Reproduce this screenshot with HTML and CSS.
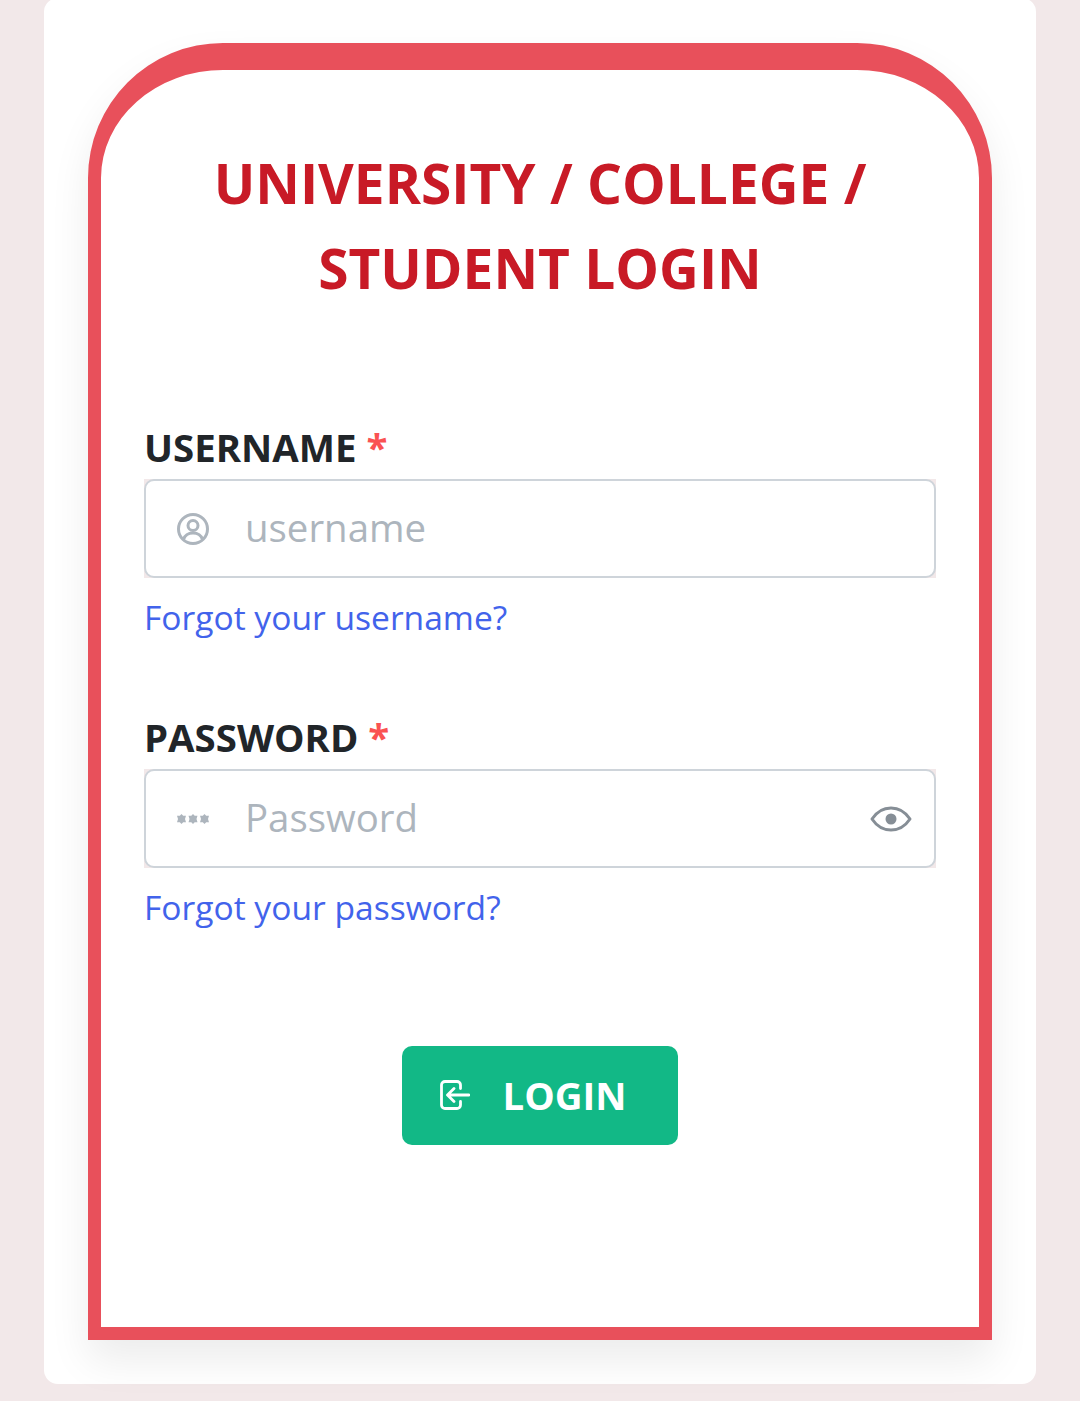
FILE: index.html
```html
<!DOCTYPE html>
<html lang="en">
<head>
  <meta charset="UTF-8" />
  <meta name="viewport" content="width=device-width, initial-scale=1.0"/>
  <title>Student Login</title>
  <link rel="stylesheet" href="styles.css">
</head>
<body>
  <div class="card">
    <form class="login-box">
      <h1 class="login-title">UNIVERSITY / COLLEGE / STUDENT LOGIN</h1>

      <div class="field">
        <label class="field-label" for="username">USERNAME <span class="required">*</span></label>
        <div class="input-group">
          <span class="input-icon">
            <svg width="34" height="34" viewBox="0 0 34 34" fill="none" stroke="#adb5bd" stroke-width="3">
              <circle cx="17" cy="17" r="14.5"/>
              <circle cx="17" cy="13.5" r="5"/>
              <path d="M7.500 27.500c1.500-4.500 5-6.500 9.500-6.500s8 2 9.500 6.500"/>
            </svg>
          </span>
          <input class="text-input" id="username" type="text" placeholder="username">
        </div>
        <a class="forgot-link" href="#">Forgot your username?</a>
      </div>

      <div class="field">
        <label class="field-label" for="password">PASSWORD <span class="required">*</span></label>
        <div class="input-group">
          <span class="input-icon">
            <svg width="34" height="11" viewBox="0 0 34 10" fill="#adb5bd">
              <path d="M5.500 0 7.200 1.700h2.800L9 5l1 3.300H7.200L5.500 10 3.800 8.300H1L2 5 1 1.700h2.800z"/>
              <path d="M17 0l1.700 1.700h2.800L20.500 5l1 3.300h-2.800L17 10l-1.700-1.700h-2.800l1-3.300-1-3.300h2.800z"/>
              <path d="M28.500 0l1.700 1.700H33L32 5l1 3.300h-2.800L28.500 10l-1.700-1.700H24L25 5l-1-3.300h2.800z"/>
            </svg>
          </span>
          <input class="text-input" id="password" type="password" placeholder="Password">
          <span class="input-icon-right">
            <svg width="42" height="26" viewBox="0 0 42 26" fill="none" stroke="#868e96" stroke-width="3">
              <path d="M2 13C7 5.500 13.500 2 21 2s14 3.500 19 11c-5 7.500-11.500 11-19 11S7 20.500 2 13z" stroke-linejoin="round"/>
              <circle cx="21" cy="13" r="5.500" fill="#868e96" stroke="none"/>
            </svg>
          </span>
        </div>
        <a class="forgot-link" href="#">Forgot your password?</a>
      </div>

      <div class="actions">
        <button class="login-btn" type="button">
          <svg width="30" height="30" viewBox="0 0 30 30" fill="none" stroke="#fff" stroke-width="2.800" stroke-linecap="round" stroke-linejoin="round">
            <path d="M20.500 8.500V5a3.500 3.500 0 0 0-3.500-3.500H5A3.500 3.500 0 0 0 1.500 5v20A3.500 3.500 0 0 0 5 28.500h12a3.500 3.500 0 0 0 3.500-3.500v-3.500"/>
            <path d="M29 15H8M14 8.500 7.500 15l6.500 6.500"/>
          </svg>
          LOGIN
        </button>
      </div>
    </form>
  </div>
</body>
</html>
```

FILE: styles.css
```css
* { box-sizing: border-box; }

body {
  margin: 0;
  padding: 0 44px 17px;
  background: #f2e8e9;
  font-family: 'Open Sans', sans-serif;
  color: #212529;
}

.card {
  margin-top: -2px;
  padding: 45px 44px 44px;
  background: #fff;
  border-radius: 14px;
}

.login-box {
  height: 1297px;
  padding: 70px 43px 0;
  background: #fff;
  border: solid #e8505b;
  border-width: 27px 13px 13px;
  border-radius: 135px 135px 0 0;
  box-shadow: 0 20px 40px rgba(0, 0, 0, 0.08);
}

.login-title {
  margin: 0 0 110px;
  font-size: 55px;
  line-height: 85px;
  font-weight: 700;
  text-align: center;
  color: #c81a26;
}

.field {
  margin-bottom: 68px;
}

.field-label {
  display: block;
  margin-bottom: 5px;
  font-size: 38.4px;
  line-height: 54px;
  font-weight: 700;
}

.required {
  color: #fa5252;
}

.input-group {
  position: relative;
  display: flex;
  align-items: center;
  height: 99px;
  background: #f2e8e9;
}

.text-input {
  width: 100%;
  height: 100%;
  padding: 0 60px 4px 99px;
  border: 2.5px solid #ced4da;
  border-radius: 10px;
  background: #fff;
  font-family: inherit;
  font-size: 38.4px;
  color: #212529;
  outline: none;
}

.text-input::placeholder {
  color: #adb5bd;
  opacity: 1;
}

.input-icon,
.input-icon-right {
  position: absolute;
  display: flex;
  top: 50%;
  transform: translateY(-50%);
}

.input-icon { left: 32px; }
.input-icon-right { right: 24px; }

.forgot-link {
  display: block;
  margin-top: 14px;
  font-size: 33.6px;
  line-height: 50px;
  color: #4263eb;
  text-decoration: none;
}

.actions {
  display: flex;
  justify-content: center;
  margin-top: 114px;
}

.login-btn {
  display: flex;
  align-items: center;
  justify-content: center;
  gap: 33px;
  width: 276px;
  height: 99px;
  padding: 0 14px 2px 0;
  border: none;
  border-radius: 10px;
  background: #12b886;
  color: #fff;
  font-family: inherit;
  font-size: 38.4px;
  font-weight: 700;
}
```
